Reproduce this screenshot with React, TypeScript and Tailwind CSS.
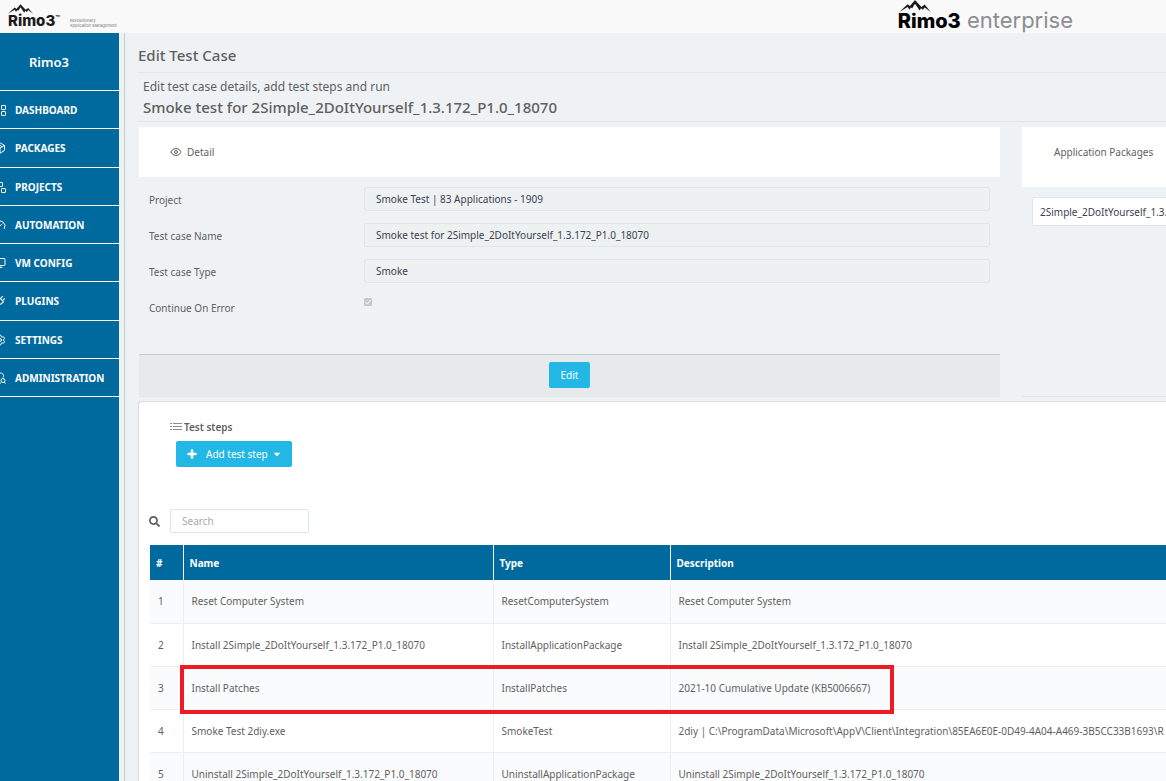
import { Package, Gauge, Monitor, Plug, Settings, Eye, Plus } from 'lucide-react'
import { FaSearch, FaCaretDown } from 'react-icons/fa'

type IconProps = { className?: string; strokeWidth?: number }

function GridIcon({ className }: IconProps) {
  return (
    <svg viewBox="0 0 12 12" className={className} fill="none" stroke="currentColor" aria-hidden="true">
      <rect x="1.5" y="1.5" width="4" height="4" rx="0.5" />
      <rect x="7.5" y="1.5" width="4" height="4" rx="0.5" />
      <rect x="1.5" y="7.5" width="4" height="4" rx="0.5" />
      <rect x="7.5" y="7.5" width="4" height="4" rx="0.5" />
    </svg>
  )
}

function BlocksIcon({ className }: IconProps) {
  return (
    <svg viewBox="0 0 12 12" className={className} fill="none" stroke="currentColor" aria-hidden="true">
      <rect x="4.5" y="1.5" width="4" height="4" rx="0.5" />
      <rect x="1.5" y="7.5" width="4" height="4" rx="0.5" />
      <rect x="7.5" y="7.5" width="4" height="4" rx="0.5" />
    </svg>
  )
}

function AdminIcon({ className }: IconProps) {
  return (
    <svg viewBox="0 0 12 12" className={className} fill="none" stroke="currentColor" aria-hidden="true">
      <path d="M9 5.5C10 4 9.500 1 6.500 1S3 4 4 5.500C4.500 6.500 4.500 7 3.500 7.500L1 9v2h6" />
      <circle cx="9" cy="8.5" r="2" />
      <path d="m10 10 1.500 1.500" />
    </svg>
  )
}

const navItems = [
  { label: 'DASHBOARD', icon: GridIcon },
  { label: 'PACKAGES', icon: Package },
  { label: 'PROJECTS', icon: BlocksIcon },
  { label: 'AUTOMATION', icon: Gauge },
  { label: 'VM CONFIG', icon: Monitor },
  { label: 'PLUGINS', icon: Plug, iconClass: 'rotate-45' },
  { label: 'SETTINGS', icon: Settings },
  { label: 'ADMINISTRATION', icon: AdminIcon },
]

const fields = [
  { id: 'project', label: 'Project', value: 'Smoke Test | 83 Applications - 1909' },
  { id: 'name', label: 'Test case Name', value: 'Smoke test for 2Simple_2DoItYourself_1.3.172_P1.0_18070' },
  { id: 'type', label: 'Test case Type', value: 'Smoke' },
]

const steps = [
  { name: 'Reset Computer System', type: 'ResetComputerSystem', description: 'Reset Computer System' },
  {
    name: 'Install 2Simple_2DoItYourself_1.3.172_P1.0_18070',
    type: 'InstallApplicationPackage',
    description: 'Install 2Simple_2DoItYourself_1.3.172_P1.0_18070',
  },
  { name: 'Install Patches', type: 'InstallPatches', description: '2021-10 Cumulative Update (KB5006667)' },
  {
    name: 'Smoke Test 2diy.exe',
    type: 'SmokeTest',
    description: '2diy | C:\\ProgramData\\Microsoft\\AppV\\Client\\Integration\\85EA6E0E-0D49-4A04-A469-3B5CC33B1693\\R',
  },
  {
    name: 'Uninstall 2Simple_2DoItYourself_1.3.172_P1.0_18070',
    type: 'UninstallApplicationPackage',
    description: 'Uninstall 2Simple_2DoItYourself_1.3.172_P1.0_18070',
  },
]

function Peaks({ className }: { className: string }) {
  return (
    <svg viewBox="0 0 34 13" className={className} fill="#1b1b1b" aria-hidden="true">
      <path d="M0 13 9 4.5l2.500 2L17 0l7 7.500L27.500 5 34 13l-6.500-5-2 2.500-2-1.500-1.500 2.500L17 4l-3 5-1.500-1L11 10.500 9 7.500Z" />
    </svg>
  )
}

function Header() {
  return (
    <header className="flex h-[33px] items-start justify-between overflow-hidden bg-[#f9f9f9] pl-2 pr-[93px] font-[Inter,sans-serif]">
      <div className="flex items-end gap-[10px] pt-1">
        <div className="flex flex-col">
          <Peaks className="h-[10px] w-[25px]" />
          <span className="flex text-[15px] font-extrabold leading-[14px] text-[#1b1b1b]">
            Rimo3<span className="text-[7px] leading-[9px]">™</span>
          </span>
        </div>
        <p className="text-[4px] leading-[5px] text-[#777]">
          Revolutionary
          <br />
          Application Management
        </p>
      </div>
      <div className="flex flex-col">
        <Peaks className="h-3 w-[34px]" />
        <span className="text-[22px] leading-4 text-[#8b8d90]">
          <b className="text-[20px] font-extrabold text-black">Rimo3</b> enterprise
        </span>
      </div>
    </header>
  )
}

function Sidebar() {
  return (
    <aside className="w-[119px] shrink-0 overflow-hidden bg-[#00699d] text-white">
      <div className="flex h-[58px] items-center border-b border-white pl-[29px] text-[13px] font-semibold">Rimo3</div>
      <nav className="flex h-[306px] flex-col">
        {navItems.map(({ label, icon: Icon, iconClass = '' }) => (
          <a
            key={label}
            href="#"
            className="flex flex-1 items-center gap-[9px] border-b border-white pt-px text-[10px] font-bold"
          >
            <span className="-ml-[6px] shrink-0">
              <Icon className={`h-3 w-3 ${iconClass}`} strokeWidth={2} />
            </span>
            {label}
          </a>
        ))}
      </nav>
    </aside>
  )
}

function DetailPanel() {
  return (
    <section className="flex min-w-0 flex-1 flex-col border-b border-[#e1e6e8]">
      <h3 className="flex h-[50px] items-center gap-[5px] bg-white pl-[31px]">
        <Eye className="h-3 w-3" strokeWidth={2} />
        Detail
      </h3>
      <form className="flex flex-col gap-3 px-[10px] pt-[10px]">
        {fields.map((field) => (
          <div key={field.id} className="flex items-center">
            <label htmlFor={field.id} className="w-[215px] shrink-0 pt-[2px]">
              {field.label}
            </label>
            <input
              id={field.id}
              disabled
              defaultValue={field.value}
              className="h-6 min-w-0 flex-1 rounded-[2px] border border-[#dde6e9] bg-[#edf1f2] px-[11px] text-[#3a3f51]"
            />
          </div>
        ))}
        <div className="flex h-6 items-center">
          <label htmlFor="continue" className="w-[215px] shrink-0 pt-[2px]">
            Continue On Error
          </label>
          <span className="relative mb-[10px] h-2 w-2">
            <input
              id="continue"
              type="checkbox"
              disabled
              defaultChecked
              className="block h-2 w-2 appearance-none rounded-[1px] bg-[#c8c8c8]"
            />
            <svg viewBox="0 0 8 8" className="absolute inset-0 h-2 w-2" fill="none" stroke="white" aria-hidden="true">
              <path d="m1.500 4 2 2 3-4" />
            </svg>
          </span>
        </div>
      </form>
      <div className="mt-[35px] flex h-[42px] items-start justify-center border-t border-[#c8cccf] bg-[#e6eaed] pt-[7px]">
        <button className="h-[26px] rounded-[2px] bg-[#23b7e5] px-3 text-white">Edit</button>
      </div>
    </section>
  )
}

function PackagesPanel() {
  return (
    <section className="w-36 shrink-0 overflow-hidden border-b border-[#e1e6e8]">
      <h3 className="flex h-[60px] items-start whitespace-nowrap bg-white pl-8 pt-[17px]">Application Packages</h3>
      <div className="ml-[10px] mt-[10px] flex h-[29px] items-center whitespace-nowrap rounded-l-[2px] border border-r-0 border-[#e1e6ea] bg-white pl-[7px] text-[#3a3f51]">
        2Simple_2DoItYourself_1.3.172_P1.0_18070
      </div>
    </section>
  )
}

function StepsTable() {
  return (
    <div className="relative ml-px mt-3">
      <table className="w-full table-fixed border-collapse text-left">
        <colgroup>
          <col className="w-[33px]" />
          <col className="w-[310px]" />
          <col className="w-[177px]" />
          <col />
        </colgroup>
        <thead>
          <tr className="h-[35px] bg-[#00699d] text-white">
            <th className="pl-[6px] font-bold">#</th>
            <th className="border-l border-white pl-[6px] font-bold">Name</th>
            <th className="border-l border-white pl-[6px] font-bold">Type</th>
            <th className="border-l border-white pl-[6px] font-bold">Description</th>
          </tr>
        </thead>
        <tbody>
          {steps.map((step, i) => (
            <tr key={step.name} className="h-[43px] border-b border-[#eee] odd:bg-[#fafbfc]">
              <td className="pl-2">{i + 1}</td>
              <td className="border-l border-[#eee] pl-2">{step.name}</td>
              <td className="border-l border-[#eee] pl-2">{step.type}</td>
              <td className="overflow-hidden whitespace-nowrap border-l border-[#eee] pl-2">{step.description}</td>
            </tr>
          ))}
        </tbody>
      </table>
      <div className="pointer-events-none absolute left-[30px] top-[120px] h-[49px] w-[714px] border-4 border-[#ed1c24]" />
    </div>
  )
}

export default function App() {
  return (
    <div className="flex h-screen flex-col overflow-hidden bg-[#eef2f5] font-['Noto_Sans','Open_Sans',sans-serif] text-[10px] leading-4 text-[#5f5f5f]">
      <Header />
      <div className="flex min-h-0 flex-1">
        <Sidebar />
        <main className="ml-[5px] min-w-0 flex-1 border-l border-[#c8cbcd] pl-[13px]">
          <h1 className="flex h-10 items-center border-b border-[#e1e6e8] pt-1 text-[15px] font-medium">Edit Test Case</h1>
          <div className="flex h-[49px] flex-col justify-center border-b border-[#e1e6e8] pl-[5px]">
            <p className="text-[12px] leading-5">Edit test case details, add test steps and run</p>
            <h2 className="text-[15px] font-medium leading-5">Smoke test for 2Simple_2DoItYourself_1.3.172_P1.0_18070</h2>
          </div>
          <div className="ml-px mt-[5px] flex gap-[22px]">
            <DetailPanel />
            <PackagesPanel />
          </div>
          <section className="mt-1 rounded-tl-[3px] border-l border-t border-[#d9dde0] bg-white pl-[10px] pt-[17px]">
            <h3 className="flex items-center gap-[2px] pl-[21px] font-semibold">
              <svg viewBox="0 0 12 8" className="h-2 w-3" stroke="#8a8a8a" fill="none" aria-hidden="true">
                <path d="M0 .5h2M3 .5h9M0 3.500h2M3 3.500h9M0 6.500h2M3 6.500h9" />
              </svg>
              Test steps
            </h3>
            <button className="ml-[27px] mt-[6px] flex h-[26px] items-center rounded-[2px] bg-[#23b7e5] px-[10px] text-white">
              <Plus className="mr-2 h-3 w-3" strokeWidth={5} />
              Add test step
              <FaCaretDown className="ml-1 h-[10px] w-[10px]" />
            </button>
            <div className="mt-[42px] flex items-center">
              <label htmlFor="search" aria-label="Search" className="w-[21px]">
                <FaSearch className="h-[11px] w-[11px]" />
              </label>
              <input
                id="search"
                placeholder="Search"
                className="h-6 w-[139px] rounded-[2px] border border-[#dde6e9] bg-white px-[11px] placeholder:text-[#a9a9a9]"
              />
            </div>
            <StepsTable />
          </section>
        </main>
      </div>
    </div>
  )
}
